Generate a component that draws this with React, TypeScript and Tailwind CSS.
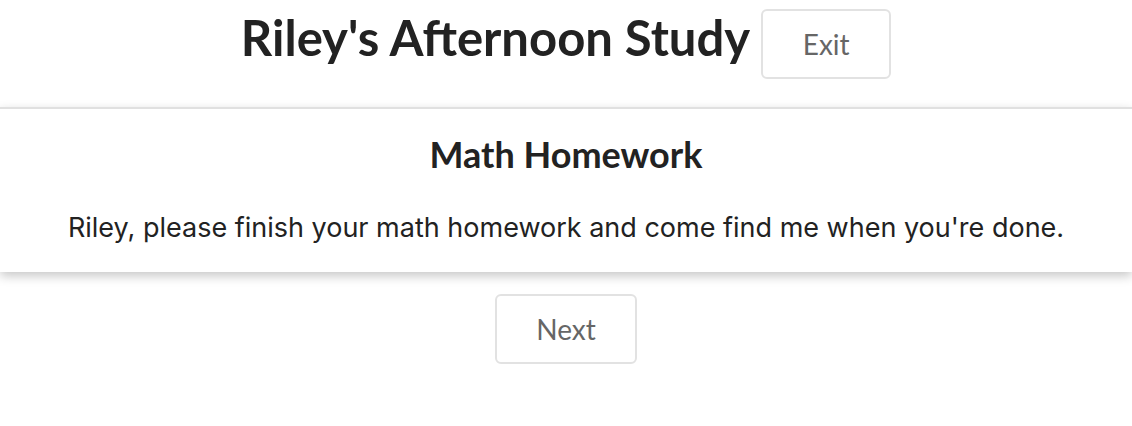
export default function App() {
  return (
    <div className="min-h-[426px] bg-white font-['Lato',sans-serif] text-[#222]">
      <div className="flex items-center justify-center gap-[11px] pt-[9px]">
        <h1 className="-mt-[14px] text-[49px] font-bold leading-none">Riley's Afternoon Study</h1>
        <button className="h-[70px] w-[130px] rounded-[6px] border-2 border-[#e2e2e2] text-[28px] text-[#666]">
          Exit
        </button>
      </div>
      <div className="mt-[28px] border-t-2 border-[#e0e0e0] bg-white pb-[31px] pt-[27px] text-center shadow-[0_4px_10px_rgba(0,0,0,0.22)]">
        <h2 className="text-[36px] font-bold leading-none">Math Homework</h2>
        <p className="mt-[42px] font-['Inter',sans-serif] text-[27px] leading-none text-[#222]">
          Riley, please finish your math homework and come find me when you're done.
        </p>
      </div>
      <div className="flex justify-center pt-[22px]">
        <button className="h-[70px] w-[142px] rounded-[6px] border-2 border-[#e2e2e2] text-[28px] text-[#666]">
          Next
        </button>
      </div>
    </div>
  );
}
